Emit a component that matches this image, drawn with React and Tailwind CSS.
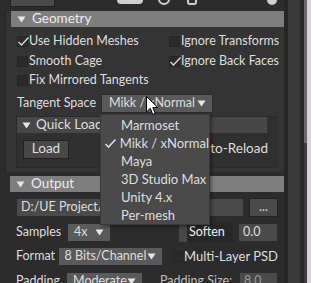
import React from "react";

const Check = ({ checked }) => (
  <span className="relative w-[11px] h-[11px] bg-[#2a2a2a] border border-[#262626] shrink-0 flex items-center justify-center">
    {checked && (
      <svg width="13" height="11" viewBox="0 0 13 11" className="absolute -left-[1px] -top-[1px]">
        <path d="M1.5 6 L4.5 9 L11.5 1.5" stroke="#d8d8d8" strokeWidth="1.4" fill="none" />
      </svg>
    )}
  </span>
);

const CheckRow = ({ checked, label, className = "" }) => (
  <div className={"flex items-center gap-[1px] " + className}>
    <Check checked={checked} />
    <span>{label}</span>
  </div>
);

const Tri = () => (
  <svg width="9" height="7" viewBox="0 0 9 7" className="shrink-0">
    <path d="M0.5 0.5 H8.5 L4.5 6.5 Z" fill="#e6e6e6" />
  </svg>
);

const Select = ({ value, className = "" }) => (
  <div className={"flex items-center justify-between bg-[#5a5a5a] border border-[#2c2c2c] pl-[6px] pr-[6px] " + className}>
    <span>{value}</span>
    <Tri />
  </div>
);

const Header = ({ title, className = "" }) => (
  <div className={"flex items-center gap-[6px] h-[16px] bg-[#7e7e7e] pl-[6px] text-[13.5px] text-[#ececec] " + className}>
    <Tri />
    <span>{title}</span>
  </div>
);

const menuItems = ["Marmoset", "Mikk / xNormal", "Maya", "3D Studio Max", "Unity 4.x", "Per-mesh"];

export default function App() {
  return (
    <div className="w-[311px] h-[283px] overflow-hidden flex bg-[#2c2c2c] font-['Lato',sans-serif] text-[12.5px] leading-none text-[#dedede] whitespace-nowrap">
      <div className="relative w-[284px] shrink-0 flex flex-col">
        {/* top toolbar, cut off */}
        <div className="flex items-end h-[6px] pl-[10px] shrink-0">
          <div className="w-[45px] h-[18px] bg-[#4a4a4a] border border-[#222] -mb-[1px]" />
          <div className="ml-[62px] w-[26px] h-[8px] rounded-full bg-[#cfcfcf] mb-[2px]" />
          <div className="ml-[15px] w-[12px] h-[12px] rounded-full border-2 border-[#cfcfcf] mb-[1px]" />
          <div className="ml-[17px] w-[10px] h-[12px] rounded-[3px] border-2 border-[#cfcfcf] mb-[1px]" />
          <div className="ml-[70px] w-[10px] h-[12px] rounded-full bg-[#cfcfcf] mb-[1px]" />
        </div>

        {/* Geometry */}
        <div className="mt-[5px] ml-[5px] border-l border-[#262626] bg-[#333] flex flex-col">
          <Header title="Geometry" className="ml-[5px]" />
          <div className="bg-[#343434] pl-[11px] pt-[4px]">
            <div className="grid grid-cols-[152px_1fr] h-[20px] items-center">
              <CheckRow checked label="Use Hidden Meshes" />
              <CheckRow label="Ignore Transforms" />
            </div>
            <div className="grid grid-cols-[152px_1fr] h-[20px] items-center">
              <CheckRow label="Smooth Cage" />
              <CheckRow checked label="Ignore Back Faces" />
            </div>
            <div className="h-[19px] flex items-center">
              <CheckRow label="Fix Mirrored Tangents" />
            </div>
            <div className="flex items-center mt-[4px] h-[19px]">
              <span className="w-[84px]">Tangent Space</span>
              <Select value="Mikk / xNormal" className="w-[112px] h-[19px] pl-[7px]" />
            </div>
            {/* Quick Loader */}
            <div className="mt-[3px] mr-[7px] border border-[#2a2a2a] bg-[#303030] flex flex-col -ml-[1px]">
              <div className="h-[16px] mr-[9px] bg-[#474747] flex items-center gap-[5px] pl-[5px] text-[13.5px]">
                <Tri />
                <span>Quick Loader</span>
              </div>
              <div className="flex items-center justify-between h-[34px] pl-[6px] pr-[8px] pb-[2px]">
                <div className="w-[46px] h-[19px] bg-[#474747] border border-[#222] flex items-center justify-center text-[13.5px]">
                  Load
                </div>
                <CheckRow label="Auto-Reload" className="text-[13.5px]" />
              </div>
            </div>
            <div className="h-[4px]" />
          </div>
        </div>

        {/* Output */}
        <div className="mt-[4px] ml-[10px] flex flex-col">
          <Header title="Output" />
          <div className="pl-[6px] pr-[6px] pt-[6px] flex flex-col">
            <div className="flex items-center gap-[5px] h-[19px]">
              <div className="flex-1 h-full bg-[#4a4a4a] border border-[#2c2c2c] flex items-center pl-[4px] overflow-hidden">
                D:/UE Project/Saved/Bake/Baked
              </div>
              <div className="w-[29px] h-full bg-[#4a4a4a] border border-[#222] flex items-center justify-center">...</div>
            </div>
            <div className="flex items-center h-[19px] mt-[6px]">
              <span className="w-[51px]">Samples</span>
              <Select value="4x" className="w-[44px] h-[19px]" />
              <div className="ml-[68px] w-[54px] h-[19px] bg-[#272727] flex items-center">
                <div className="w-[8px] h-full bg-[#474747]" />
                <span className="ml-[2px] text-[#f0f0f0]">Soften</span>
              </div>
              <div className="ml-[5px] flex-1 h-[19px] bg-[#4a4a4a] border border-[#2c2c2c] flex items-center pl-[4px]">0.0</div>
            </div>
            <div className="flex items-center h-[19px] mt-[5px]">
              <span className="w-[44px]">Format</span>
              <Select value="8 Bits/Channel" className="w-[111px] h-[19px]" />
              <CheckRow label="Multi-Layer PSD" className="ml-[9px] text-[13px]" />
            </div>
            <div className="flex items-center h-[19px] mt-[6px]">
              <span className="w-[50px]">Padding</span>
              <Select value="Moderate" className="w-[77px] h-[19px]" />
              <span className="ml-[17px] text-[#bdbdbd]">Padding Size:</span>
              <div className="ml-auto w-[39px] h-[19px] bg-[#4a4a4a] border border-[#2c2c2c] flex items-center pl-[4px] text-[#999]">8.0</div>
            </div>
          </div>
        </div>

        {/* dropdown menu */}
        <div className="absolute left-[100px] top-[114px] w-[110px] bg-[#4a4a4a] border border-[#3a3a3a] shadow-[2px_2px_3px_rgba(0,0,0,0.35)] pt-[1px] text-[13px]">
          {menuItems.map((it) => (
            <div key={it} className="h-[18px] flex items-center">
              <span className="w-[20px] flex justify-center">
                {it === "Mikk / xNormal" && (
                  <svg width="13" height="11" viewBox="0 0 13 11">
                    <path d="M1.5 6 L4.5 9 L11.5 1.5" stroke="#dcdcdc" strokeWidth="1.6" fill="none" />
                  </svg>
                )}
              </span>
              <span>{it}</span>
            </div>
          ))}
        </div>

        {/* mouse cursor */}
        <svg className="absolute left-[146px] top-[96px]" width="13" height="20" viewBox="0 0 13 20">
          <path d="M0.5 0.5 V16 L4.3 12.3 L6.8 18.5 L9.2 17.5 L6.8 11.5 H11.8 Z" fill="#fff" stroke="#000" strokeWidth="1" />
        </svg>
      </div>

      {/* scrollbar area */}
      <div className="w-[4px] bg-[#262626]" />
      <div className="w-[12px] bg-[#3a3a3a]" />
      <div className="w-[4px] bg-[#2a2a2a]" />
      <div className="w-[3px] bg-[#3c3c3c] flex flex-col">
        <div className="h-[143px] bg-[#6a6a6a]" />
      </div>
      <div className="flex-1 bg-[#d7d3d8]" />
    </div>
  );
}
